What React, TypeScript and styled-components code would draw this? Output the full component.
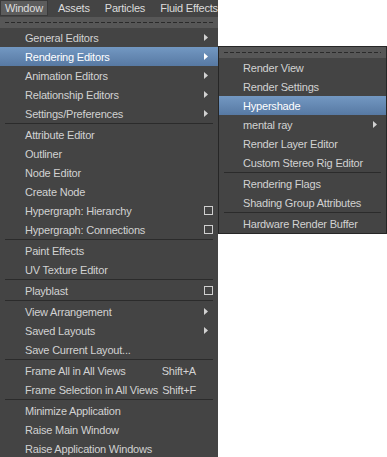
import React from "react";
import styled, { createGlobalStyle } from "styled-components";

type Entry =
  | { kind: "sep" }
  | {
      kind: "item";
      label: string;
      sub?: boolean;
      box?: boolean;
      shortcut?: string;
      active?: boolean;
    };

const item = (label: string, extra: Partial<Omit<Entry, "kind">> = {}): Entry =>
  ({ kind: "item", label, ...extra } as Entry);
const sep: Entry = { kind: "sep" };

const windowMenu: Entry[] = [
  item("General Editors", { sub: true }),
  item("Rendering Editors", { sub: true, active: true }),
  item("Animation Editors", { sub: true }),
  item("Relationship Editors", { sub: true }),
  item("Settings/Preferences", { sub: true }),
  sep,
  item("Attribute Editor"),
  item("Outliner"),
  item("Node Editor"),
  item("Create Node"),
  item("Hypergraph: Hierarchy", { box: true }),
  item("Hypergraph: Connections", { box: true }),
  sep,
  item("Paint Effects"),
  item("UV Texture Editor"),
  sep,
  item("Playblast", { box: true }),
  sep,
  item("View Arrangement", { sub: true }),
  item("Saved Layouts", { sub: true }),
  item("Save Current Layout..."),
  sep,
  item("Frame All in All Views", { shortcut: "Shift+A" }),
  item("Frame Selection in All Views", { shortcut: "Shift+F" }),
  sep,
  item("Minimize Application"),
  item("Raise Main Window"),
  item("Raise Application Windows"),
];

const renderingMenu: Entry[] = [
  item("Render View"),
  item("Render Settings"),
  item("Hypershade", { active: true }),
  item("mental ray", { sub: true }),
  item("Render Layer Editor"),
  item("Custom Stereo Rig Editor"),
  sep,
  item("Rendering Flags"),
  item("Shading Group Attributes"),
  sep,
  item("Hardware Render Buffer"),
];

const menuBar = ["Window", "Assets", "Particles", "Fluid Effects"];

export default function App() {
  return (
    <>
      <GlobalStyle />
      <Page>
        <LeftColumn>
          <MenuBar>
            {menuBar.map((name, i) => (
              <BarItem key={name} $active={i === 0}>
                {name}
              </BarItem>
            ))}
          </MenuBar>
          <MenuList entries={windowMenu} />
        </LeftColumn>
        <SubMenu>
          <MenuList entries={renderingMenu} />
        </SubMenu>
      </Page>
    </>
  );
}

function MenuList({ entries }: { entries: Entry[] }) {
  return (
    <>
      <TearOff />
      {entries.map((e, i) =>
        e.kind === "sep" ? (
          <Separator key={i} />
        ) : (
          <Item key={i} $active={!!e.active}>
            <Label>{e.label}</Label>
            {e.shortcut && <Shortcut>{e.shortcut}</Shortcut>}
            <Trail>
              {e.sub && (
                <svg width="4" height="7" viewBox="0 0 4 7">
                  <path d="M0 0 L4 3.5 L0 7 Z" fill="currentColor" />
                </svg>
              )}
              {e.box && <CheckBox />}
            </Trail>
          </Item>
        )
      )}
    </>
  );
}

const GlobalStyle = createGlobalStyle`
  html, body {
    margin: 0;
    padding: 0;
    background: #ffffff;
  }
  body {
    font-family: "Liberation Sans", Arial, sans-serif;
    font-size: 11px;
    letter-spacing: -0.2px;
  }
`;

const Page = styled.div`
  display: flex;
  align-items: flex-start;
  width: 387px;
  height: 457px;
  overflow: hidden;
`;

const LeftColumn = styled.div`
  width: 218px;
  flex-shrink: 0;
  background: #444444;
  height: 457px;
  overflow: hidden;
`;

const MenuBar = styled.div`
  display: flex;
  gap: 5px;
  height: 17px;
  white-space: nowrap;
  overflow: hidden;
  background: #444444;
`;

const BarItem = styled.div<{ $active: boolean }>`
  height: 14px;
  line-height: 14px;
  padding: 0 4px;
  color: #dcdcdc;
  border: 1px solid ${({ $active }) => ($active ? "#393939" : "transparent")};
  background: ${({ $active }) => ($active ? "#5c5c5c" : "transparent")};
`;

const SubMenu = styled.div`
  width: 167px;
  margin-top: 46px;
  background: #444444;
  border: 1px solid #262626;
`;

const TearOff = styled.div`
  display: flex;
  align-items: center;
  height: 11px;
  padding: 0 5px;
  background: #575757;

  &::after {
    content: "";
    flex: 1;
    height: 1px;
    background: repeating-linear-gradient(
      to right,
      #2a2a2a 0 4px,
      transparent 4px 6px
    );
  }
`;

const Item = styled.div<{ $active: boolean }>`
  display: flex;
  align-items: center;
  height: 19px;
  padding: 0 4px 0 24px;
  white-space: nowrap;
  color: ${({ $active }) => ($active ? "#ffffff" : "#d2d2d2")};
  background: ${({ $active }) =>
    $active ? "linear-gradient(#7398c2, #5779a3)" : "transparent"};

  ${LeftColumn} & {
    padding-left: 25px;
    padding-right: 5px;
  }
`;

const Label = styled.span`
  flex: 1;
`;

const Shortcut = styled.span`
  margin-right: 8px;
`;

const Trail = styled.span`
  display: flex;
  align-items: center;
  width: 9px;
  height: 9px;
  color: inherit;
`;

const CheckBox = styled.span`
  width: 9px;
  height: 9px;
  box-sizing: border-box;
  border: 1px solid #cfcfcf;
`;

const Separator = styled.div`
  height: 2px;
  padding: 0 5px;

  &::before {
    content: "";
    display: block;
    height: 1px;
    background: #2b2b2b;
  }
`;
